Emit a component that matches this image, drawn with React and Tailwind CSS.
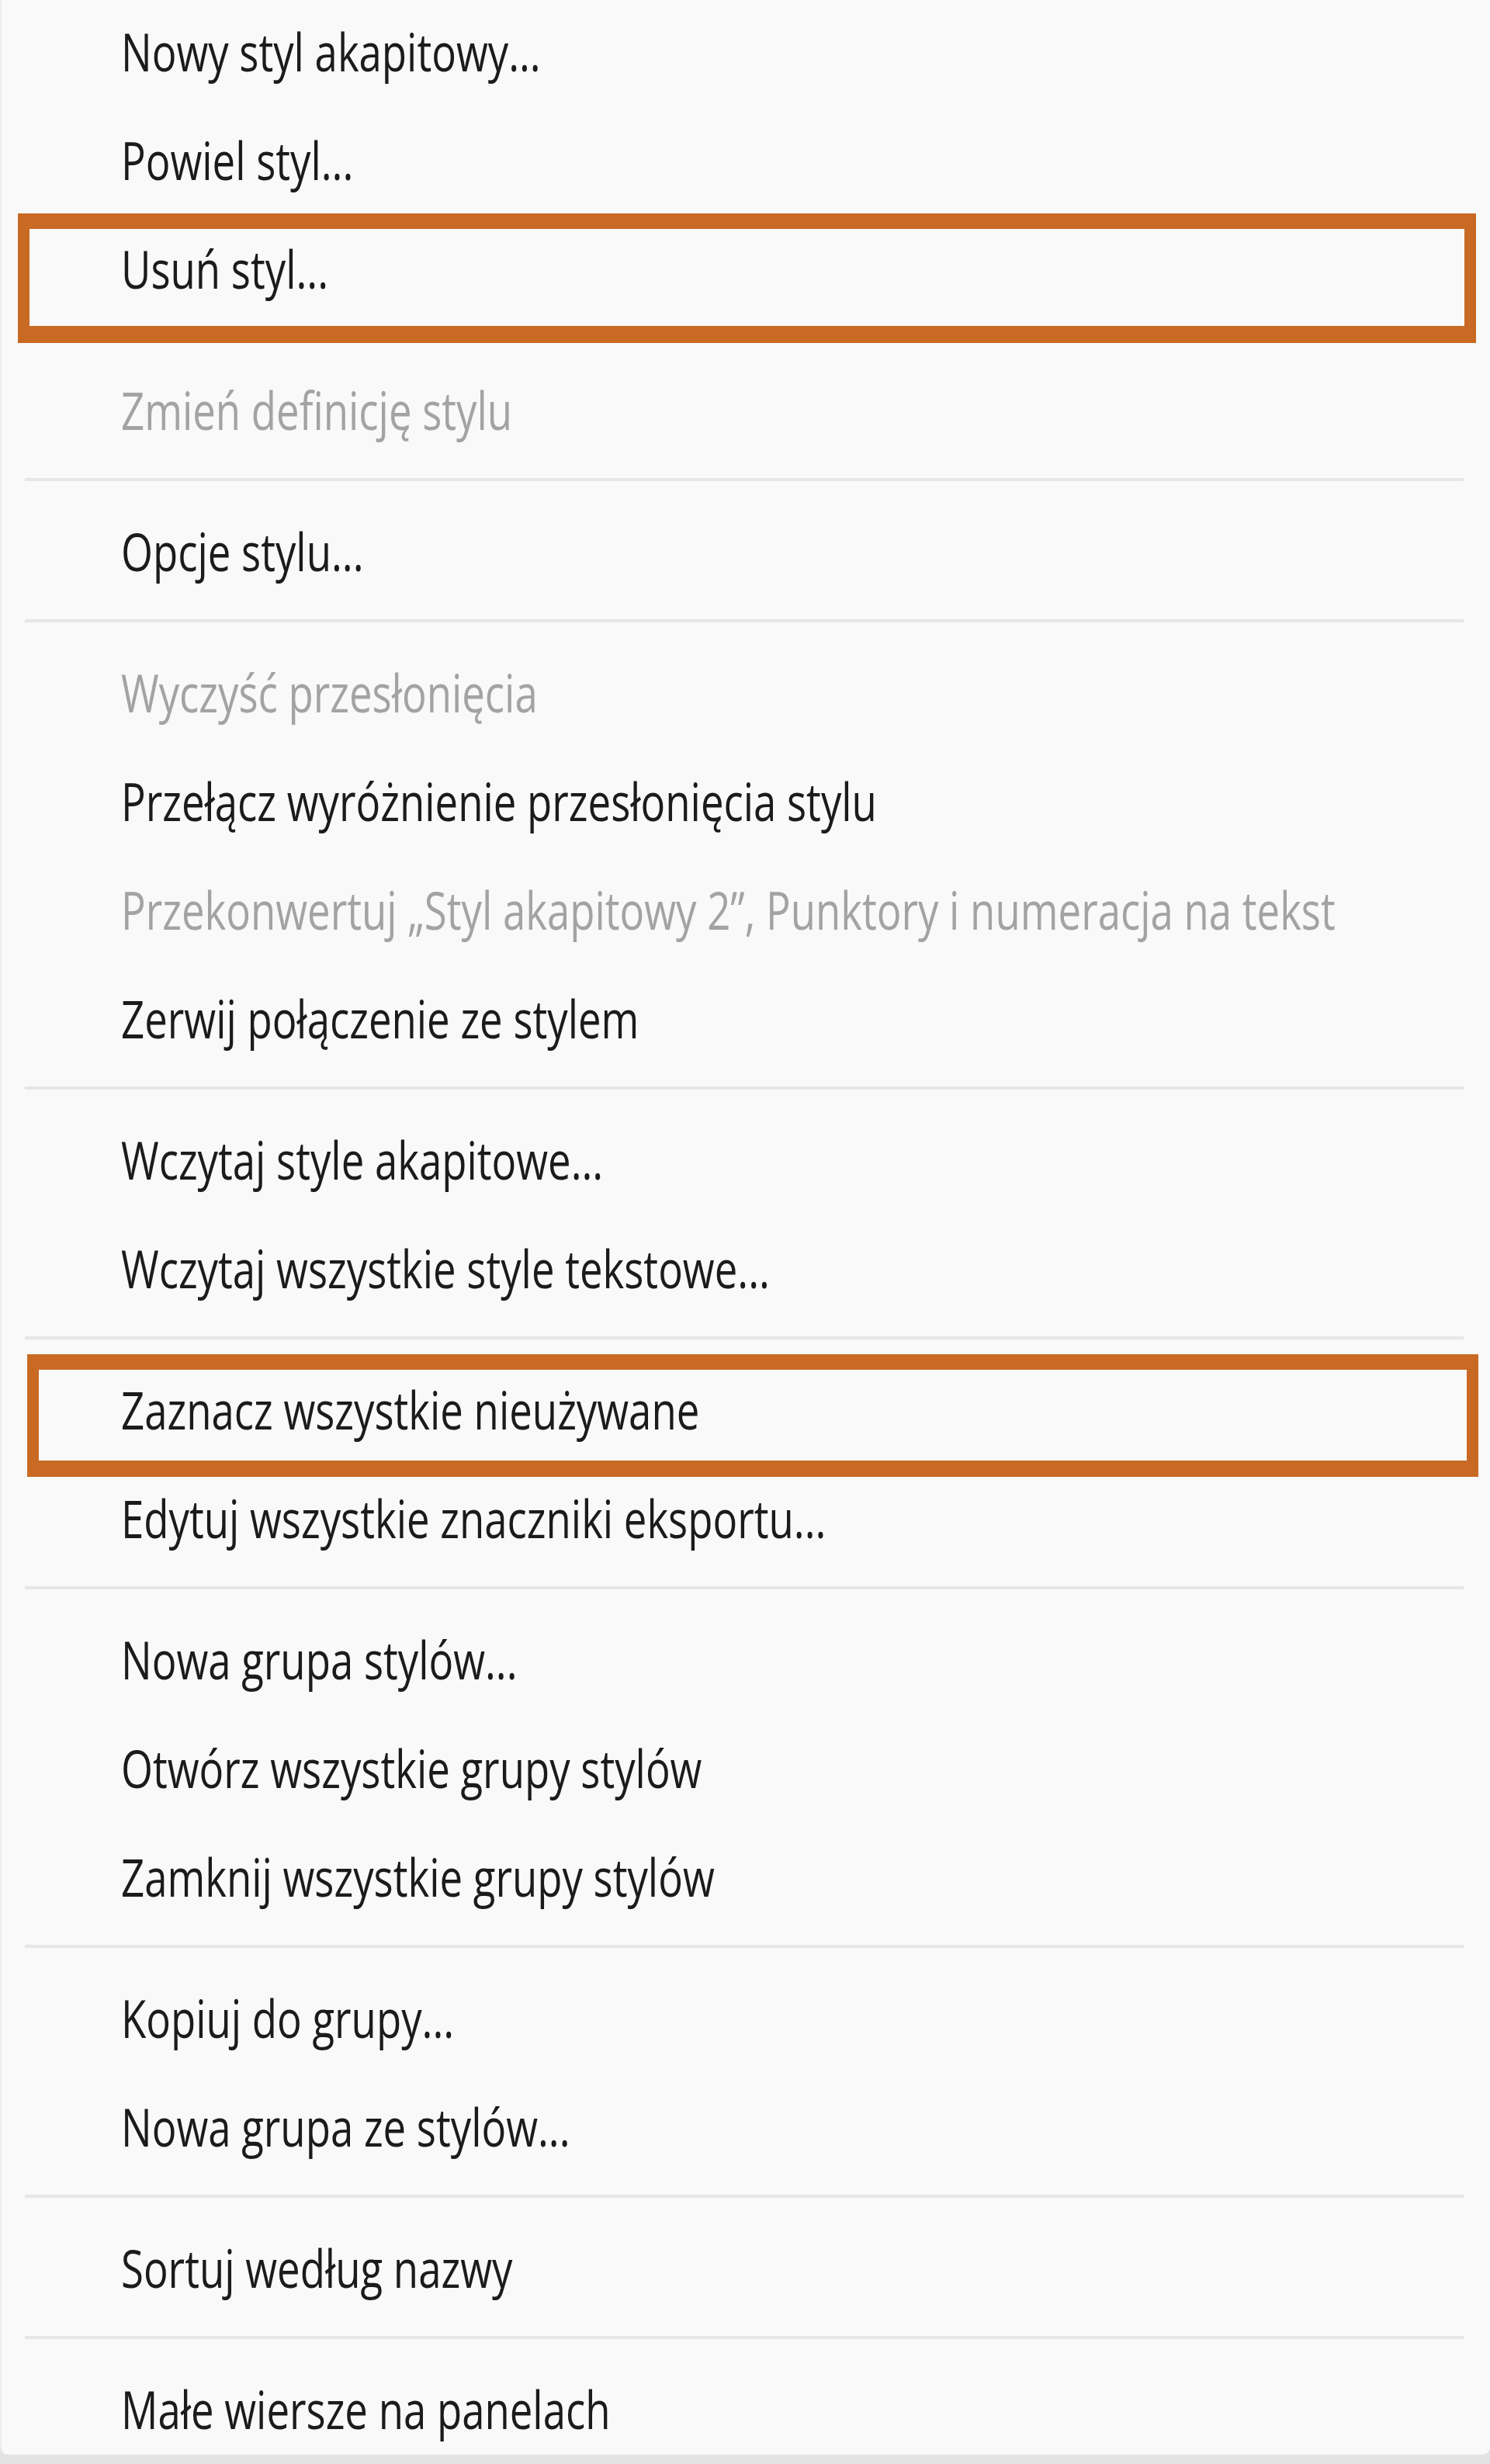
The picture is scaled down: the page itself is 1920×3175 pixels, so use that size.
import React from 'react';

const items = [
  { label: 'Nowy styl akapitowy...' },
  { label: 'Powiel styl...' },
  { label: 'Usuń styl...', mark: 'first' },
  { sep: true },
  { label: 'Zmień definicję stylu', disabled: true },
  { sep: true },
  { label: 'Opcje stylu...' },
  { sep: true },
  { label: 'Wyczyść przesłonięcia', disabled: true },
  { label: 'Przełącz wyróżnienie przesłonięcia stylu' },
  { label: 'Przekonwertuj „Styl akapitowy 2”, Punktory i numeracja na tekst', disabled: true },
  { label: 'Zerwij połączenie ze stylem' },
  { sep: true },
  { label: 'Wczytaj style akapitowe...' },
  { label: 'Wczytaj wszystkie style tekstowe...' },
  { sep: true },
  { label: 'Zaznacz wszystkie nieużywane', mark: 'second' },
  { label: 'Edytuj wszystkie znaczniki eksportu...' },
  { sep: true },
  { label: 'Nowa grupa stylów...' },
  { label: 'Otwórz wszystkie grupy stylów' },
  { label: 'Zamknij wszystkie grupy stylów' },
  { sep: true },
  { label: 'Kopiuj do grupy...' },
  { label: 'Nowa grupa ze stylów...' },
  { sep: true },
  { label: 'Sortuj według nazwy' },
  { sep: true },
  { label: 'Małe wiersze na panelach', last: true },
];

const MenuItem = ({ label, disabled, mark, last }) => (
  <div className={`relative pl-[154px] ${last ? 'h-[125px]' : 'h-[140px]'}`}>
    <div
      className={`leading-[132px] text-[68px] whitespace-nowrap origin-left scale-x-[0.775] ${
        disabled ? 'text-[#a3a3a3]' : 'text-[#1b1b1b]'
      }`}
    >
      {label}
    </div>

    {/* orange annotation frames drawn over the menu */}
    {mark === 'first' && (
      <div className="absolute left-[21px] right-[18px] top-[-5px] bottom-[-22px] border-x-[15px] border-t-[20px] border-b-[22px] border-[#c96a24] pointer-events-none" />
    )}
    {mark === 'second' && (
      <div className="absolute left-[33px] right-[15px] top-[-5px] bottom-[-13px] border-x-[15px] border-t-[20px] border-b-[21px] border-[#c96a24] pointer-events-none" />
    )}
  </div>
);

const Separator = () => (
  <div className="h-[42px] pt-[14px]">
    <div className="ml-[30px] mr-[34px] h-[4px] bg-[#e6e6e6]" />
  </div>
);

export default function App() {
  return (
    <div className="min-h-[3175px] bg-[#e3e3e3] font-['Open_Sans','Noto_Sans',sans-serif]">
      <div className="bg-[#f9f9f9] rounded-b-[10px] border-l-2 border-[#ececec] overflow-hidden">
        {items.map((item, i) =>
          item.sep ? <Separator key={i} /> : <MenuItem key={i} {...item} />
        )}
      </div>
    </div>
  );
}
